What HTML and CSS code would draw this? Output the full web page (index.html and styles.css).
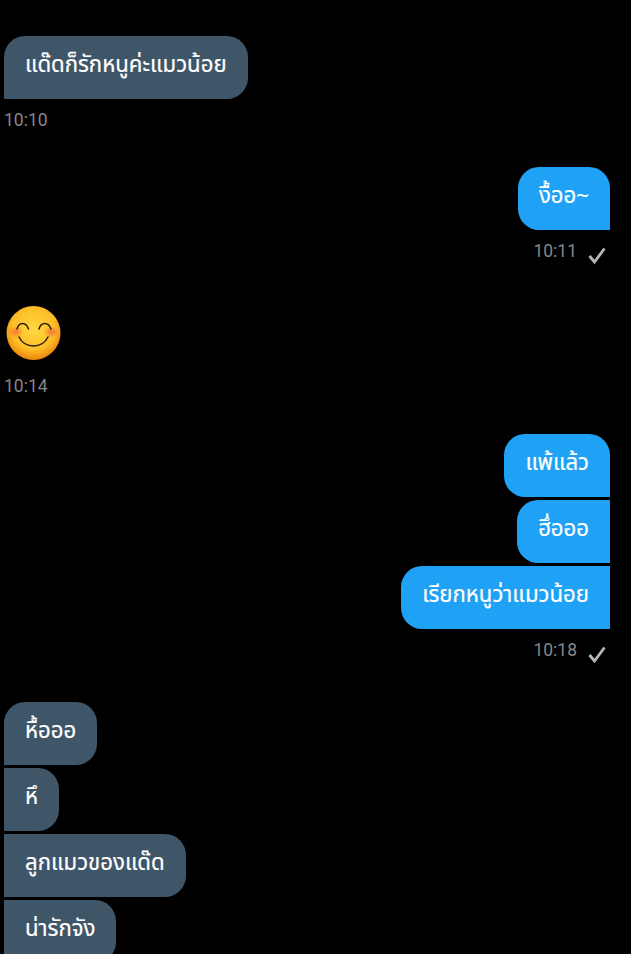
FILE: index.html
```html
<!DOCTYPE html>
<html lang="th">
<head>
<meta charset="utf-8">
<title>Chat</title>
<link rel="stylesheet" href="styles.css">
</head>
<body>
<main class="chat">
  <section class="group group-in g1">
    <div class="bubble in first">แด๊ดก็รักหนูค่ะแมวน้อย</div>
    <div class="meta"><time class="time">10:10</time></div>
  </section>
  <section class="group group-out g2">
    <div class="bubble out first">งื้ออ~</div>
    <div class="meta"><time class="time">10:11</time>
      <svg class="check" viewBox="0 0 20 18" width="20" height="18"><path d="M2.5 10 L7.5 16 L17.5 2.5" fill="none" stroke="#b4b8bb" stroke-width="2.8"/></svg>
    </div>
  </section>
  <section class="group group-in g3">
    <svg class="emoji" viewBox="0 0 56 56" width="56" height="56">
      <defs>
        <radialGradient id="face" cx="50%" cy="42%" r="56%">
          <stop offset="0" stop-color="#ffd83f"/>
          <stop offset="0.7" stop-color="#fdbe28"/>
          <stop offset="1" stop-color="#ee8a0e"/>
        </radialGradient>
        <radialGradient id="blush">
          <stop offset="0" stop-color="#f4683a" stop-opacity=".85"/>
          <stop offset="1" stop-color="#f4683a" stop-opacity="0"/>
        </radialGradient>
      </defs>
      <circle cx="28.5" cy="28" r="27" fill="url(#face)"/>
      <ellipse cx="10.5" cy="27" rx="8" ry="6" fill="url(#blush)"/>
      <ellipse cx="46.5" cy="27" rx="8" ry="6" fill="url(#blush)"/>
      <path d="M12 24 C14 16.5 21 16.5 23.5 24 M34 24 C36 16.5 43.5 16.5 46 24 M14 32 C20 44 37 44 43 32" fill="none" stroke="#2e1c06" stroke-width="1.5" stroke-linecap="round"/>
    </svg>
    <div class="meta"><time class="time">10:14</time></div>
  </section>
  <section class="group group-out g4">
    <div class="bubble out first">แพ้แล้ว</div>
    <div class="bubble out">ฮึ่อออ</div>
    <div class="bubble out">เรียกหนูว่าแมวน้อย</div>
    <div class="meta"><time class="time">10:18</time>
      <svg class="check" viewBox="0 0 20 18" width="20" height="18"><path d="M2.5 10 L7.5 16 L17.5 2.5" fill="none" stroke="#b4b8bb" stroke-width="2.8"/></svg>
    </div>
  </section>
  <section class="group group-in g5">
    <div class="bubble in first">หื้อออ</div>
    <div class="bubble in">หึ</div>
    <div class="bubble in">ลูกแมวของแด๊ด</div>
    <div class="bubble in">น่ารักจัง</div>
  </section>
</main>
</body>
</html>
```
FILE: styles.css
```css
html, body {
  margin: 0;
  height: 100%;
  background: #000;
  overflow: hidden;
}
.chat {
  display: flex;
  flex-direction: column;
  padding: 36px 21px 0 4px;
  font-family: "Noto Sans", "Noto Sans Thai", Roboto, "Liberation Sans", sans-serif;
}
.group {
  display: flex;
  flex-direction: column;
  gap: 3px;
}
.group-in { align-items: flex-start; }
.group-out { align-items: flex-end; }
.g2 { margin-top: 37px; }
.g3 { margin-top: 44px; }
.g4 { margin-top: 38px; }
.g5 { margin-top: 42px; }
.bubble {
  box-sizing: border-box;
  height: 63px;
  padding: 0 21px 6px;
  display: flex;
  align-items: center;
  color: #fff;
  font-size: 22.2px;
  -webkit-text-stroke: 0.2px #fff;
  white-space: nowrap;
}
.in {
  background: #3f5568;
  border-radius: 0 21px 21px 0;
}
.in.first { border-top-left-radius: 21px; }
.out {
  background: #1fa2f5;
  border-radius: 21px 0 0 21px;
}
.out.first { border-top-right-radius: 21px; }
.meta {
  display: flex;
  align-items: flex-start;
  gap: 10px;
  height: 20px;
  margin-top: 8px;
}
.group-out .meta { padding-right: 3px; }
.time {
  font-family: Roboto, "Liberation Sans", sans-serif;
  font-size: 17.5px;
  line-height: 20px;
  color: #85878a;
}
.check { margin-top: 5px; }
.emoji { display: block; margin-left: 1px; margin-bottom: 4px; }
```
